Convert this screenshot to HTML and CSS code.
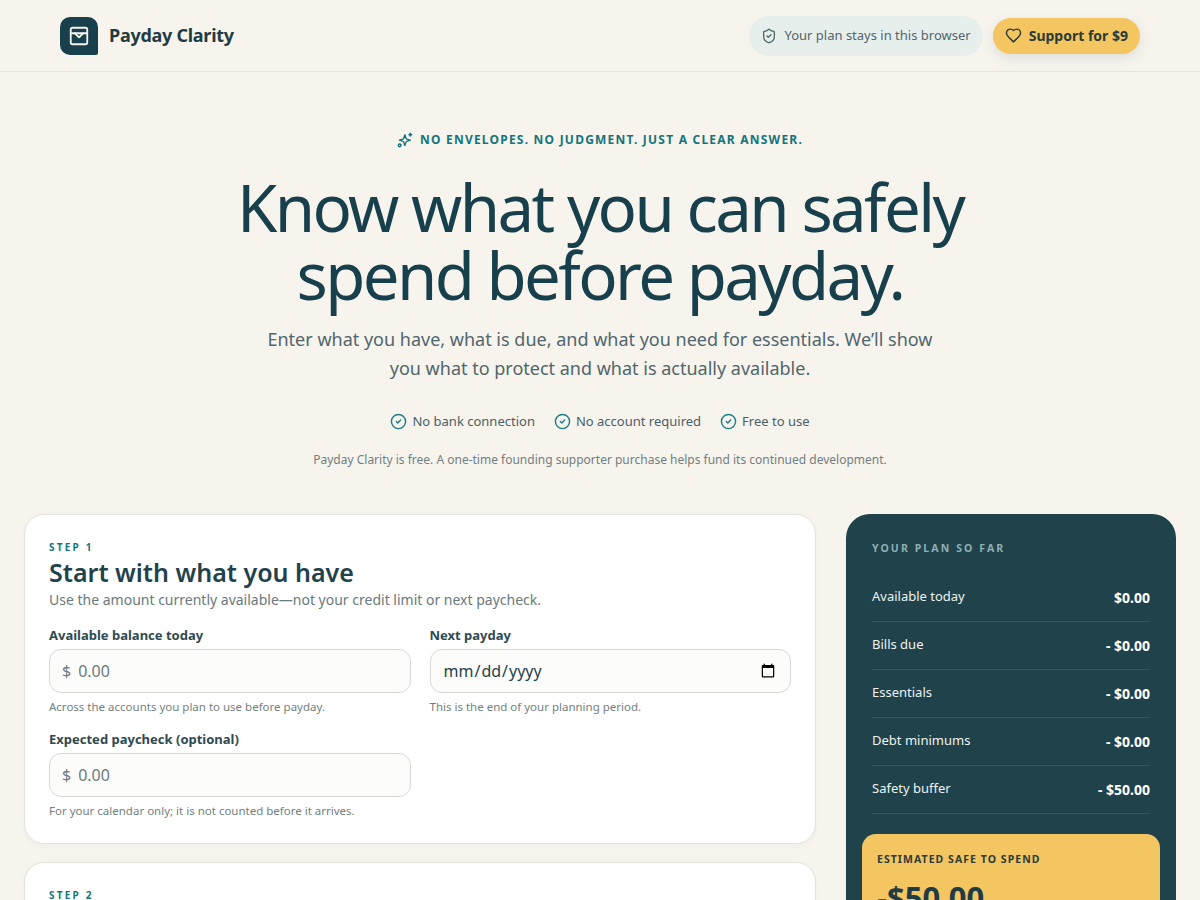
FILE: index.html
```html
<!DOCTYPE html>
<html lang="en">
<head>
<meta charset="utf-8">
<title>Payday Clarity</title>
<link rel="stylesheet" href="styles.css">
</head>
<body>
<header class="site-header">
  <div class="brand">
    <span class="brand-mark">
      <svg width="22" height="22" viewBox="0 0 24 24" fill="none" stroke="currentColor" stroke-width="2" stroke-linecap="round" stroke-linejoin="round"><rect x="3" y="3" width="18" height="18" rx="2"/><path d="M3 9h18"/><path d="M7.500 9l4.500 4.500L16.500 9"/></svg>
    </span>
    <span class="brand-name">Payday Clarity</span>
  </div>
  <div class="header-actions">
    <span class="privacy-pill">
      <svg width="16" height="16" viewBox="0 0 24 24" fill="none" stroke="currentColor" stroke-width="2" stroke-linecap="round" stroke-linejoin="round"><path d="M20 13c0 5-3.500 7.500-7.660 8.950a1 1 0 0 1-.67-.01C7.500 20.500 4 18 4 13V6a1 1 0 0 1 1-1c2 0 4.500-1.200 6.240-2.720a1.170 1.170 0 0 1 1.520 0C14.510 3.810 17 5 19 5a1 1 0 0 1 1 1z"/><path d="m9 12 2 2 4-4"/></svg>
      <span class="pill-text">Your plan stays in this browser</span>
    </span>
    <button class="support-btn">
      <svg width="17" height="17" viewBox="0 0 24 24" fill="none" stroke="currentColor" stroke-width="2" stroke-linecap="round" stroke-linejoin="round"><path d="M19 14c1.490-1.460 3-3.210 3-5.500A5.500 5.500 0 0 0 16.500 3c-1.760 0-3 .5-4.500 2-1.500-1.500-2.740-2-4.500-2A5.500 5.500 0 0 0 2 8.500c0 2.300 1.500 4.050 3 5.500l7 7Z"/></svg>
      Support for $9
    </button>
  </div>
</header>

<section class="hero">
  <p class="eyebrow">
    <svg width="16" height="16" viewBox="0 0 24 24" fill="none" stroke="currentColor" stroke-width="2.300" stroke-linecap="round" stroke-linejoin="round"><path d="m12 3-1.900 5.800a2 2 0 0 1-1.300 1.300L3 12l5.800 1.900a2 2 0 0 1 1.300 1.300L12 21l1.900-5.800a2 2 0 0 1 1.300-1.300L21 12l-5.800-1.900a2 2 0 0 1-1.300-1.300Z" transform="translate(1 1.500) scale(.9)"/><path d="M20 2v4"/><path d="M22 4h-4"/><circle cx="4" cy="20" r="2"/></svg>
    No envelopes. No judgment. Just a clear answer.
  </p>
  <h1 class="hero-title">Know what you can safely spend before payday.</h1>
  <p class="hero-sub">Enter what you have, what is due, and what you need for essentials. We’ll show you what to protect and what is actually available.</p>
  <ul class="trust-list">
    <li class="trust-item"><svg width="17" height="17" viewBox="0 0 24 24" fill="none" stroke="currentColor" stroke-width="2" stroke-linecap="round" stroke-linejoin="round"><circle cx="12" cy="12" r="10"/><path d="m9 12 2 2 4-4"/></svg>No bank connection</li>
    <li class="trust-item"><svg width="17" height="17" viewBox="0 0 24 24" fill="none" stroke="currentColor" stroke-width="2" stroke-linecap="round" stroke-linejoin="round"><circle cx="12" cy="12" r="10"/><path d="m9 12 2 2 4-4"/></svg>No account required</li>
    <li class="trust-item"><svg width="17" height="17" viewBox="0 0 24 24" fill="none" stroke="currentColor" stroke-width="2" stroke-linecap="round" stroke-linejoin="round"><circle cx="12" cy="12" r="10"/><path d="m9 12 2 2 4-4"/></svg>Free to use</li>
  </ul>
  <p class="hero-note">Payday Clarity is free. A one-time founding supporter purchase helps fund its continued development.</p>
</section>

<main class="layout">
  <div class="steps">
    <section class="card">
      <p class="step-label">Step 1</p>
      <h2 class="card-title">Start with what you have</h2>
      <p class="card-desc">Use the amount currently available—not your credit limit or next paycheck.</p>
      <div class="field-grid">
        <div class="field">
          <label class="field-label" for="balance">Available balance today</label>
          <div class="money-input"><span class="currency">$</span><input id="balance" class="input-bare" type="text" placeholder="0.00"></div>
          <p class="hint">Across the accounts you plan to use before payday.</p>
        </div>
        <div class="field">
          <label class="field-label" for="payday">Next payday</label>
          <input id="payday" class="date-input" type="date">
          <p class="hint">This is the end of your planning period.</p>
        </div>
        <div class="field">
          <label class="field-label" for="paycheck">Expected paycheck (optional)</label>
          <div class="money-input"><span class="currency">$</span><input id="paycheck" class="input-bare" type="text" placeholder="0.00"></div>
          <p class="hint">For your calendar only; it is not counted before it arrives.</p>
        </div>
      </div>
    </section>
    <section class="card">
      <p class="step-label">Step 2</p>
      <h2 class="card-title">List what is due</h2>
    </section>
  </div>

  <aside class="summary">
    <p class="summary-title">Your plan so far</p>
    <dl class="summary-list">
      <div class="summary-row"><dt>Available today</dt><dd>$0.00</dd></div>
      <div class="summary-row"><dt>Bills due</dt><dd>- $0.00</dd></div>
      <div class="summary-row"><dt>Essentials</dt><dd>- $0.00</dd></div>
      <div class="summary-row"><dt>Debt minimums</dt><dd>- $0.00</dd></div>
      <div class="summary-row"><dt>Safety buffer</dt><dd>- $50.00</dd></div>
    </dl>
    <div class="safe-box">
      <p class="safe-label">Estimated safe to spend</p>
      <p class="safe-amount">-$50.00</p>
    </div>
  </aside>
</main>
</body>
</html>
```
FILE: styles.css
```css
* { box-sizing: border-box; }
html, body { margin: 0; padding: 0; }
body {
  background: #f7f4ee;
  color: #1f424b;
  font-family: "Noto Sans", "Open Sans", sans-serif;
  font-size: 14px;
}
p, h1, h2, ul, dl, dd { margin: 0; padding: 0; }

.site-header {
  height: 72px;
  padding: 0 60px;
  display: flex;
  align-items: center;
  justify-content: space-between;
  border-bottom: 1px solid #e6e3dc;
}
.brand { display: flex; align-items: center; gap: 11px; }
.brand-mark {
  width: 38px;
  height: 38px;
  border-radius: 10px 10px 2px 10px;
  background: #18404c;
  color: #f7f4ee;
  display: flex;
  align-items: center;
  justify-content: center;
}
.brand-name {
  font-size: 18px;
  font-weight: 700;
  color: #1f3b43;
  letter-spacing: -0.015em;
  padding-bottom: 2px;
}
.header-actions { display: flex; align-items: center; gap: 10px; }
.privacy-pill {
  height: 40px;
  padding: 0 12px;
  border-radius: 20px;
  background: #e7efec;
  color: #51666c;
  font-size: 13px;
  display: flex;
  align-items: center;
  gap: 7px;
}
.pill-text { padding-bottom: 2px; }
.support-btn {
  height: 36px;
  padding: 0 12px;
  border: 0;
  border-radius: 18px;
  background: #f3c661;
  color: #2c3a38;
  font: 700 14px "Noto Sans", sans-serif;
  display: flex;
  align-items: center;
  gap: 7px;
  box-shadow: 0 4px 12px rgba(31, 66, 75, 0.12);
}

.hero { padding-top: 58px; text-align: center; }
.eyebrow {
  display: flex;
  align-items: center;
  justify-content: center;
  gap: 7px;
  color: #12757d;
  font-size: 12px;
  font-weight: 700;
  line-height: 20px;
  letter-spacing: 1.22px;
  text-transform: uppercase;
}
.hero-title {
  width: 800px;
  margin: 23px auto 0;
  color: #18404c;
  font-size: 65.3px;
  font-weight: 400;
  line-height: 68px;
  letter-spacing: -0.04em;
}
.hero-sub {
  width: 700px;
  margin: 16px auto 0;
  color: #51666c;
  font-size: 18px;
  line-height: 29px;
}
.trust-list {
  list-style: none;
  margin-top: 28px;
  display: flex;
  justify-content: center;
  gap: 19px;
}
.trust-item {
  display: flex;
  align-items: center;
  gap: 5px;
  font-size: 13px;
  line-height: 20px;
  color: #4b6066;
}
.trust-item svg { color: #1b7f86; }
.hero-note {
  margin-top: 20px;
  font-size: 12px;
  line-height: 18px;
  color: #727f81;
}

.layout {
  margin-top: 45px;
  padding: 0 24px;
  display: grid;
  grid-template-columns: 792px 330px;
  gap: 30px;
  align-items: start;
}
.steps { display: flex; flex-direction: column; gap: 18px; }
.card {
  background: #fff;
  border: 1px solid #e4e2dc;
  border-radius: 20px;
  padding: 25px 24px 24px;
  box-shadow: 0 2px 6px rgba(31, 66, 75, 0.03);
}
.step-label {
  color: #12757d;
  font-size: 10px;
  font-weight: 700;
  line-height: 14px;
  letter-spacing: 0.22em;
  text-transform: uppercase;
}
.card-title {
  color: #1f424b;
  font-size: 25px;
  font-weight: 600;
  line-height: 30px;
  margin-top: 3px;
}
.card-desc {
  margin-top: 3px;
  color: #6a7a7d;
  font-size: 14px;
  line-height: 20px;
}
.field-grid {
  margin-top: 16px;
  display: grid;
  grid-template-columns: 1fr 1fr;
  column-gap: 19px;
  row-gap: 15px;
}
.field-label {
  display: block;
  color: #2f4a50;
  font-size: 13px;
  font-weight: 700;
  line-height: 18px;
  margin-bottom: 5px;
}
.money-input, .date-input {
  width: 100%;
  height: 44px;
  border: 1px solid #d8d8d4;
  border-radius: 12px;
  background: #fcfcfb;
}
.money-input {
  display: flex;
  align-items: center;
  padding: 0 12px;
  gap: 5px;
}
.currency { color: #6a7a7d; font-size: 16px; }
.input-bare {
  flex: 1;
  min-width: 0;
  border: 0;
  outline: 0;
  background: transparent;
  font: 16px "Noto Sans", sans-serif;
  color: #1f424b;
}
.input-bare::placeholder { color: #6a7a7d; opacity: 1; }
.date-input {
  padding: 0 12px;
  font: 16px "Noto Sans", sans-serif;
  color: #1f424b;
}
.hint {
  margin-top: 6px;
  color: #727f81;
  font-size: 11.5px;
  line-height: 16px;
}

.summary {
  background: #1f424b;
  border-radius: 24px;
  padding: 24px 16px 16px;
  color: #fff;
}
.summary-title {
  padding: 0 10px;
  color: #8fb0b3;
  font-size: 10.5px;
  font-weight: 700;
  line-height: 20px;
  letter-spacing: 0.2em;
  text-transform: uppercase;
}
.summary-list { margin: 16px 10px 20px; }
.summary-row {
  height: 48px;
  display: flex;
  align-items: center;
  justify-content: space-between;
  border-bottom: 1px solid #35575f;
}
.summary-row dt { font-size: 13px; color: #eef3f2; margin-top: -3px; }
.summary-row dd { font-size: 14px; font-weight: 700; margin-top: -1px; }
.safe-box {
  background: #f3c661;
  border-radius: 14px;
  padding: 16px 15px 15px;
  color: #2c3a38;
}
.safe-label {
  font-size: 10.5px;
  font-weight: 700;
  line-height: 18px;
  letter-spacing: 0.1em;
  text-transform: uppercase;
}
.safe-amount {
  margin-top: 9px;
  color: #1f3b43;
  font-size: 31px;
  font-weight: 700;
  line-height: 40px;
}
```
